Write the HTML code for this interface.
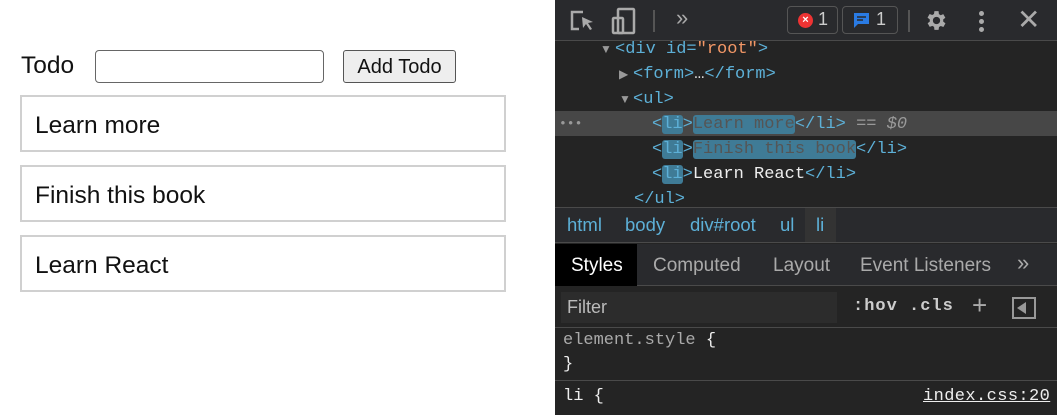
<!DOCTYPE html>
<html><head><style>
*{margin:0;padding:0;box-sizing:border-box}
body{width:1057px;height:415px;overflow:hidden;background:#fff;font-family:"Liberation Sans",sans-serif;position:relative}
.a{position:absolute}
.li{position:absolute;left:20px;width:486px;height:57px;border:2px solid #d0d0d0;font-size:24.5px;padding-left:13px;line-height:57px;color:#111}
.dt{position:absolute;left:555px;top:0;width:502px;height:415px;background:#242424;color:#ddd}
.m{font-family:"Liberation Mono",monospace;font-size:17px;white-space:pre}
.t{color:#5db0d7}.v{color:#f29766}
.hl{background:#3f7b96;border-radius:3px;color:#555}
.row{position:absolute;height:25px;line-height:25px}
.ar{position:absolute;color:#999;font-size:12px;line-height:25px}
.line{position:absolute;left:0;width:502px;height:1px;background:#4a4a4a}
</style></head><body>
<div class="a" style="left:21px;top:52px;font-size:24.5px;color:#111">Todo</div>
<div class="a" style="left:95px;top:50px;width:229px;height:33px;border:1.5px solid #666;border-radius:4px"></div>
<div class="a" style="left:343px;top:50px;width:113px;height:33px;border:1.5px solid #555;border-radius:3px;background:#eee;font-size:20px;line-height:32px;text-align:center;color:#111">Add Todo</div>
<div class="li" style="top:95px">Learn more</div>
<div class="li" style="top:165px">Finish this book</div>
<div class="li" style="top:235px">Learn React</div>

<div class="dt">
 <div class="a" style="left:0;top:0;width:502px;height:40px;background:#292a2d"></div>
 <svg class="a" style="left:14px;top:9px" width="30" height="26" viewBox="0 0 30 26" fill="none" stroke="#aaa" stroke-width="2.5"><path d="M14 3H3v17h7"/><path d="M13 8l11 5-5 1 4 6-2 1-4-6-3 4z" fill="#aaa" stroke="none"/></svg>
 <svg class="a" style="left:56px;top:7px" width="26" height="28" viewBox="0 0 26 28" fill="none" stroke="#aaa" stroke-width="2.5"><rect x="7" y="2" width="16" height="24" rx="1"/><rect x="2" y="11" width="10" height="15" rx="1"/></svg>
 <div class="a" style="left:98px;top:10px;width:2px;height:22px;background:#555"></div>
 <div class="a" style="left:121px;top:5px;font-size:22px;color:#aaa">»</div>
 <div class="a" style="left:232px;top:6px;width:51px;height:28px;border:1.5px solid #555;border-radius:4px"></div>
 <div class="a" style="left:243px;top:13px;width:15px;height:15px;border-radius:50%;background:#e33;color:#fff;font-size:11px;line-height:15px;text-align:center;font-weight:bold">×</div>
 <div class="a" style="left:263px;top:9px;font-size:18px;color:#ccc">1</div>
 <div class="a" style="left:287px;top:6px;width:56px;height:28px;border:1.5px solid #555;border-radius:4px"></div>
 <svg class="a" style="left:298px;top:12px" width="17" height="17" viewBox="0 0 17 17"><path d="M1 1h15v11H5l-4 4z" fill="#2a7be4"/><path d="M4 5h9M4 8h6" stroke="#292a2d" stroke-width="1.5"/></svg>
 <div class="a" style="left:321px;top:9px;font-size:18px;color:#ccc">1</div>
 <div class="a" style="left:353px;top:10px;width:2px;height:22px;background:#555"></div>
 <svg class="a" style="left:369px;top:8px" width="25" height="25" viewBox="0 0 24 24"><path fill="#aaa" d="M19.4 13a7.5 7.5 0 000-2l2.1-1.6-2-3.5-2.5 1a7.6 7.6 0 00-1.7-1L15 3h-4l-.4 2.7a7.6 7.6 0 00-1.7 1l-2.5-1-2 3.5L6.6 11a7.5 7.5 0 000 2l-2.1 1.6 2 3.5 2.5-1c.5.4 1.1.7 1.7 1L11 21h4l.4-2.7c.6-.3 1.2-.6 1.7-1l2.5 1 2-3.5zM13 15.5a3.5 3.5 0 110-7 3.5 3.5 0 010 7z" transform="translate(-1 0)"/></svg>
 <div class="a" style="left:424px;top:11px;width:5px;height:5px;border-radius:50%;background:#aaa;box-shadow:0 8px 0 #aaa,0 16px 0 #aaa"></div>
 <div class="a" style="left:462px;top:3px;font-size:28px;color:#aaa">✕</div>
 <div class="line" style="top:40px"></div>

 <div class="a" style="left:0;top:111px;width:502px;height:25px;background:#474747"></div>
 <div class="ar" style="left:45px;top:37px">▼</div>
 <div class="row m" style="left:60px;top:37px"><span class="t">&lt;div id=</span><span class="v">"root"</span><span class="t">&gt;</span></div>
 <div class="ar" style="left:64px;top:62px">▶</div>
 <div class="row m" style="left:78px;top:62px"><span class="t">&lt;form&gt;</span>…<span class="t">&lt;/form&gt;</span></div>
 <div class="ar" style="left:64px;top:87px">▼</div>
 <div class="row m" style="left:78px;top:87px"><span class="t">&lt;ul&gt;</span></div>
 <div class="row m" style="left:4px;top:111px;color:#999;font-size:13px">•••</div>
 <div class="row m" style="left:97px;top:112px"><span class="t">&lt;<span class="hl" style="color:#5db0d7">li</span>&gt;</span><span class="hl">Learn more</span><span class="t">&lt;/li&gt;</span> <span style="color:#999">== <i>$0</i></span></div>
 <div class="row m" style="left:97px;top:137px"><span class="t">&lt;<span class="hl" style="color:#5db0d7">li</span>&gt;</span><span class="hl">Finish this book</span><span class="t">&lt;/li&gt;</span></div>
 <div class="row m" style="left:97px;top:162px"><span class="t">&lt;<span class="hl" style="color:#5db0d7">li</span>&gt;</span><span style="color:#eee">Learn React</span><span class="t">&lt;/li&gt;</span></div>
 <div class="row m" style="left:79px;top:187px"><span class="t">&lt;/ul&gt;</span></div>

 <div class="a" style="left:0;top:207px;width:502px;height:36px;background:#292a2d;border-top:1px solid #4a4a4a;border-bottom:1px solid #4a4a4a"></div>
 <div class="a" style="left:250px;top:208px;width:31px;height:34px;background:#333"></div>
 <div class="a t" style="left:12px;top:214px;font-size:18.5px">html</div>
 <div class="a t" style="left:70px;top:214px;font-size:18.5px">body</div>
 <div class="a t" style="left:135px;top:214px;font-size:18.5px">div#root</div>
 <div class="a t" style="left:225px;top:214px;font-size:18.5px">ul</div>
 <div class="a t" style="left:261px;top:214px;font-size:18.5px">li</div>

 <div class="a" style="left:0;top:244px;width:502px;height:42px;background:#292a2d;border-bottom:1px solid #4a4a4a"></div>
 <div class="a" style="left:0;top:244px;width:82px;height:42px;background:#000"></div>
 <div class="a" style="left:16px;top:255px;font-size:19px;color:#fff">Styles</div>
 <div class="a" style="left:98px;top:255px;font-size:19px;color:#aaa">Computed</div>
 <div class="a" style="left:218px;top:255px;font-size:19px;color:#aaa">Layout</div>
 <div class="a" style="left:305px;top:255px;font-size:19px;color:#aaa">Event Listeners</div>
 <div class="a" style="left:462px;top:250px;font-size:22px;color:#aaa">»</div>

 <div class="a" style="left:0;top:287px;width:502px;height:41px;background:#242424;border-bottom:1px solid #4a4a4a"></div>
 <div class="a" style="left:6px;top:292px;width:276px;height:31px;background:#2c2c2c"></div>
 <div class="a" style="left:12px;top:297px;font-size:18px;color:#bbb">Filter</div>
 <div class="a m" style="left:298px;top:297px;color:#ccc;font-weight:bold;letter-spacing:1px">:hov .cls</div>
 <div class="a" style="left:417px;top:290px;font-size:26px;color:#aaa">+</div>
 <div class="a" style="left:457px;top:297px;width:24px;height:22px;border:2px solid #999"></div>
 <div class="a" style="left:462px;top:302px;width:0;height:0;border-top:6px solid transparent;border-bottom:6px solid transparent;border-right:9px solid #999"></div>

 <div class="a m" style="left:8px;top:331px;color:#aaa">element.style <span style="color:#eee">{</span></div>
 <div class="a m" style="left:8px;top:355px;color:#eee">}</div>
 <div class="a" style="left:0;top:380px;width:502px;height:1px;background:#4a4a4a"></div>
 <div class="a m" style="left:8px;top:387px;color:#eee">li {</div>
 <div class="a m" style="left:368px;top:387px;color:#eee;text-decoration:underline;letter-spacing:0.4px">index.css:20</div>
</div>
</body></html>
